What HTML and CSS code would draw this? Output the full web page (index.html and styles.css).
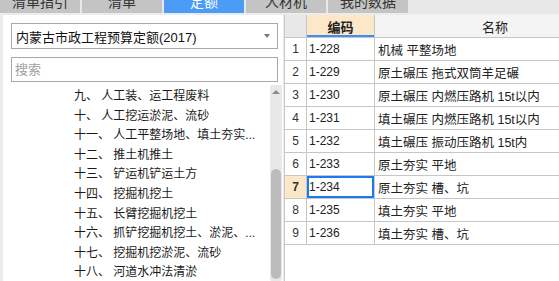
FILE: index.html
```html
<!DOCTYPE html>
<html lang="zh-CN">
<head>
    <meta charset="UTF-8">
    <title>定额</title>
    <link rel="stylesheet" href="styles.css">
</head>
<body>
    <div class="tabs">
        <div class="tab">清单指引</div>
        <div class="tab">清单</div>
        <div class="tab active">定额</div>
        <div class="tab">人材机</div>
        <div class="tab">我的数据</div>
    </div>
    <div class="main">
        <div class="left">
            <div class="select">
                <span>内蒙古市政工程预算定额(2017)</span>
                <span class="caret"></span>
            </div>
            <div class="search">搜索</div>
            <div class="tree-wrap">
                <ul class="tree">
                    <li>九、 人工装、运工程废料</li>
                    <li>十、 人工挖运淤泥、流砂</li>
                    <li>十一、 人工平整场地、填土夯实...</li>
                    <li>十二、 推土机推土</li>
                    <li>十三、 铲运机铲运土方</li>
                    <li>十四、 挖掘机挖土</li>
                    <li>十五、 长臂挖掘机挖土</li>
                    <li>十六、 抓铲挖掘机挖土、淤泥、...</li>
                    <li>十七、 挖掘机挖淤泥、流砂</li>
                    <li>十八、 河道水冲法清淤</li>
                </ul>
                <div class="scrollbar">
                    <div class="arrow"></div>
                    <div class="thumb"></div>
                </div>
            </div>
        </div>
        <div class="right">
            <table class="grid">
                <thead>
                    <tr>
                        <th class="num"></th>
                        <th class="code">编码</th>
                        <th class="name">名称</th>
                    </tr>
                </thead>
                <tbody>
                    <tr><td class="num">1</td><td class="code">1-228</td><td class="name">机械 平整场地</td></tr>
                    <tr><td class="num">2</td><td class="code">1-229</td><td class="name">原土碾压 拖式双筒羊足碾</td></tr>
                    <tr><td class="num">3</td><td class="code">1-230</td><td class="name">原土碾压 内燃压路机 15t以内</td></tr>
                    <tr><td class="num">4</td><td class="code">1-231</td><td class="name">填土碾压 内燃压路机 15t以内</td></tr>
                    <tr><td class="num">5</td><td class="code">1-232</td><td class="name">填土碾压 振动压路机 15t内</td></tr>
                    <tr><td class="num">6</td><td class="code">1-233</td><td class="name">原土夯实 平地</td></tr>
                    <tr class="current"><td class="num">7</td><td class="code">1-234</td><td class="name">原土夯实 槽、坑</td></tr>
                    <tr><td class="num">8</td><td class="code">1-235</td><td class="name">填土夯实 平地</td></tr>
                    <tr><td class="num">9</td><td class="code">1-236</td><td class="name">填土夯实 槽、坑</td></tr>
                </tbody>
            </table>
        </div>
    </div>
</body>
</html>
```
FILE: styles.css
```css
body {
    margin: 0;
    width: 559px;
    height: 281px;
    overflow: hidden;
    background-color: #ececec;
    font-family: "Liberation Sans", "Noto Sans CJK SC", sans-serif;
    font-size: 13px;
    color: #222;
}
/* tab strip is scrolled up, only the lower half shows */
.tabs {
    display: flex;
    gap: 2px;
    height: 13px;
    overflow: hidden;
    background-color: #e8e8e8;
}
.tab {
    width: 80px;
    flex: none;
    height: 13px;
    line-height: 4px;
    text-align: center;
    background-color: #c4c4c4;
    color: #333;
    font-size: 14px;
}
.tab.active {
    background-color: #4a9cf6;
    color: #fff;
}
.main {
    display: flex;
    margin-top: 2px;
    height: 266px;
}
.left {
    width: 280px;
    margin-left: 3px;
    background-color: #fff;
    display: flex;
    flex-direction: column;
    padding: 8px 0 0 8px;
    box-sizing: border-box;
}
.select {
    width: 267px;
    height: 26px;
    box-sizing: border-box;
    border: 1px solid #a9a9a9;
    display: flex;
    align-items: center;
    justify-content: space-between;
    padding: 0 7px 0 4px;
    font-size: 13px;
    color: #111;
}
.caret {
    width: 0;
    height: 0;
    border-left: 3.5px solid transparent;
    border-right: 3.5px solid transparent;
    border-top: 4px solid #777;
}
.search {
    width: 267px;
    height: 25px;
    box-sizing: border-box;
    border: 1px solid #a9a9a9;
    margin-top: 8px;
    padding-left: 3px;
    line-height: 23px;
    color: #a0a0a0;
    font-size: 13px;
}
.tree-wrap {
    display: flex;
    flex: 1;
    margin-top: 3px;
    overflow: hidden;
}
.tree {
    list-style: none;
    margin: 0;
    padding: 2px 0 0 63px;
    width: 192px;
    flex: none;
}
.tree li {
    height: 19.6px;
    line-height: 19.6px;
    white-space: nowrap;
    font-size: 12px;
    color: #1a1a1a;
}
.scrollbar {
    width: 12px;
    margin-left: 4px;
    background-color: #e8e8e8;
    display: flex;
    flex-direction: column;
    align-items: center;
    border-radius: 2px;
}
.arrow {
    margin-top: 5px;
    width: 0;
    height: 0;
    border-left: 4px solid transparent;
    border-right: 4px solid transparent;
    border-bottom: 4px solid #8a8a8a;
}
.thumb {
    margin-top: 75px;
    width: 10px;
    flex: 1;
    margin-bottom: 2px;
    background-color: #bcbcbc;
    border-radius: 5px;
}
.right {
    flex: 1;
    margin-left: 1px;
    border-left: 1px solid #c8c8c8;
    background-color: #fff;
    overflow: hidden;
}
.grid {
    border-collapse: collapse;
    table-layout: fixed;
    width: 330px;
}
.grid th,
.grid td {
    border: 1px solid #c6c6c6;
    height: 22px;
    padding: 0;
    white-space: nowrap;
    overflow: hidden;
    font-size: 13px;
}
.grid thead th {
    border-top: none;
    font-weight: normal;
}
.grid th.num {
    width: 21px;
    border-left: none;
    background-color: #e8e8e8;
}
.grid th.code {
    width: 67px;
    background-color: #fde7c9;
    font-weight: bold;
    box-shadow: inset 0 -2px 0 #3d8ef0;
}
.grid th.name {
    width: 240px;
    background-color: #f4f4f4;
    text-align: center;
}
.grid td.num {
    text-align: center;
    border-left: none;
    font-size: 12px;
    color: #333;
}
.grid td.code {
    padding-left: 2px;
    font-size: 12px;
}
.grid td.name {
    padding-left: 3px;
    font-size: 12.5px;
}
.grid tr.current td.num {
    background-color: #fde7c9;
    font-weight: bold;
}
.grid tr.current td.code {
    box-shadow: inset 0 0 0 2px #1e78f0;
}
```
